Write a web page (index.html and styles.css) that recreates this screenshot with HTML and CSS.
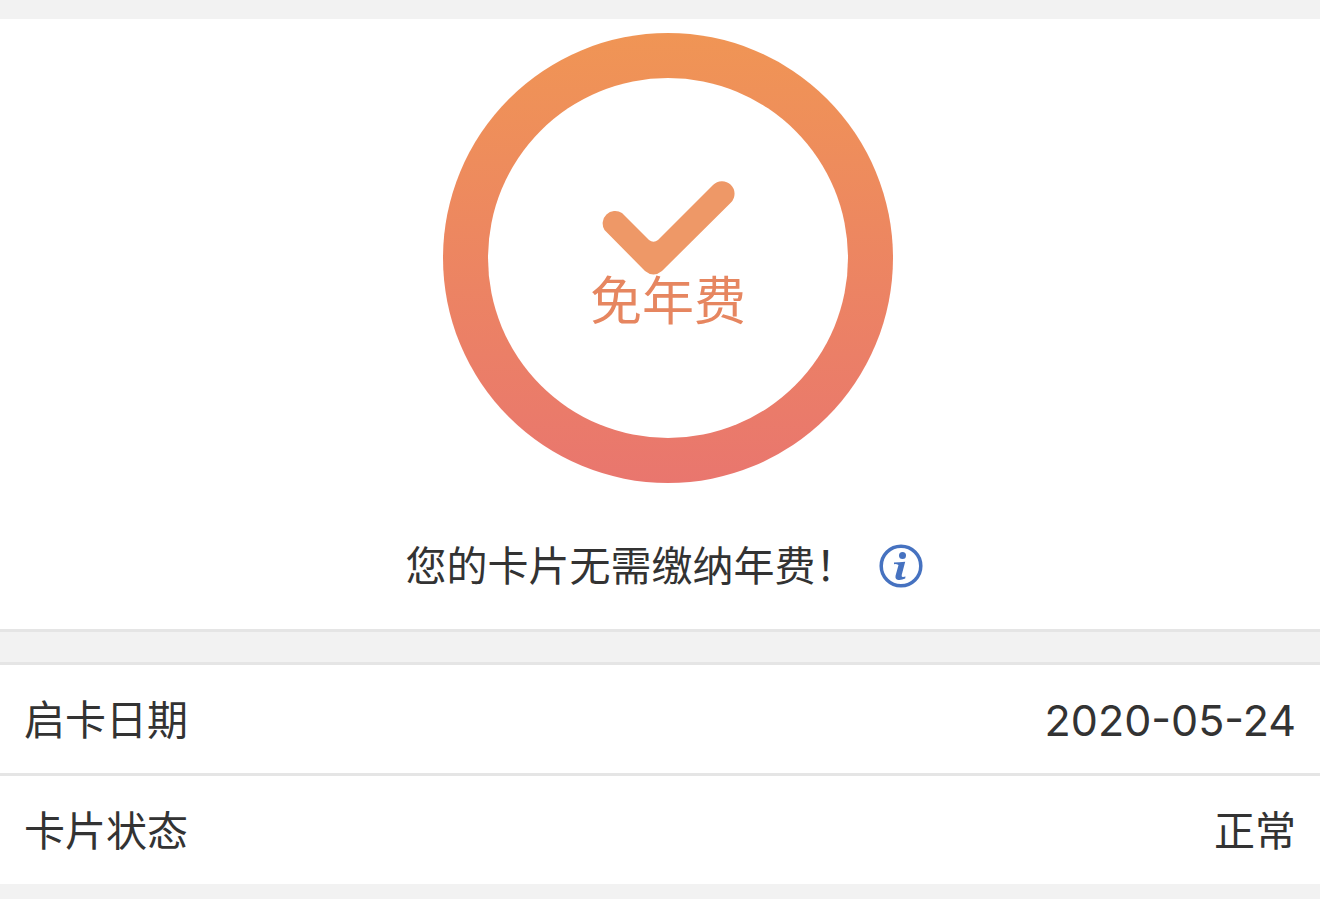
FILE: index.html
```
<!DOCTYPE html>
<html lang="zh-CN">
	<head>
		<meta charset="UTF-8">
		<meta name="viewport" content="width=device-width, initial-scale=1">
		<title>年费查询</title>
		<link rel="stylesheet" href="styles.css">
	</head>
	<body>
		<div class="fee">
			<div class="fee-ring">
				<div class="fee-inner">
					<svg class="fee-check" viewBox="0 0 136 96" aria-hidden="true">
						<path d="M4.500 50A12.500 12.500 0 0 1 22 33L49 60Q53.500 63.500 58 60L113 5A12.500 12.500 0 0 1 131 22.500L62 91Q53.500 98 45 91Z" fill="#ee9867"/>
					</svg>
					<p class="fee-tit">免年费</p>
				</div>
			</div>
			<div class="fee-tip">
				<p>您的卡片无需缴纳年费！</p>
				<button type="button" class="info" aria-label="说明">
					<svg viewBox="0 0 44 44" aria-hidden="true">
						<circle cx="22" cy="22" r="19.800" fill="none" stroke="#4672c0" stroke-width="3.500"/>
						<circle cx="23.500" cy="11.500" r="3.500" fill="#4672c0"/>
						<path d="M15 18.500Q20 18.200 26.200 17.800L22.700 31Q22.300 33.300 24 33.100L26.500 32.600L26.200 34.500Q22.500 36.300 19.300 35.900Q15.700 35.300 16.600 31.500L19.500 21Q17.500 19.800 15 20.200Z" fill="#4672c0"/>
					</svg>
				</button>
			</div>
		</div>
		<dl class="card">
			<div class="card-item">
				<dt>启卡日期</dt>
				<dd class="date">2020-05-24</dd>
			</div>
			<div class="card-item">
				<dt>卡片状态</dt>
				<dd>正常</dd>
			</div>
		</dl>
	</body>
</html>
```
FILE: styles.css
```
*{
	margin:0;
	padding:0;
	box-sizing:border-box;
}
body{
	padding:19px 0 15px;
	background:#f2f2f2;
	color:#333;
	font-family:Inter,"Noto Sans CJK SC",sans-serif;
	font-size:41px;
	line-height:60px;
}
.fee{
	padding:14px 0 33px 16px;
	background:#fff;
	border-bottom:3px solid #e5e5e5;
}
/*渐变圆环*/
.fee-ring{
	width:450px;
	height:450px;
	margin:0 auto;
	padding:45px;
	border-radius:50%;
	background:linear-gradient(#f09555,#e9766e);
}
.fee-inner{
	height:100%;
	padding-top:102px;
	border-radius:50%;
	background:#fff;
	text-align:center;
}
.fee-check{
	display:block;
	width:136px;
	height:96px;
	margin:0 auto;
}
.fee-tit{
	color:#e68660;
	font-size:52px;
	line-height:52px;
}
.fee-tip{
	display:flex;
	justify-content:center;
	align-items:center;
	gap:22px;
	margin:53px 8px 0 0;
}
.info{
	width:44px;
	height:44px;
	border:0;
	background:none;
	cursor:pointer;
}
.info svg{
	display:block;
}
.card{
	margin-top:30px;
	background:#fff;
}
.card-item{
	display:flex;
	justify-content:space-between;
	padding:25px 24px 23px;
	border-top:3px solid #e5e5e5;
}
.date{
	font-size:43px;
}
```
